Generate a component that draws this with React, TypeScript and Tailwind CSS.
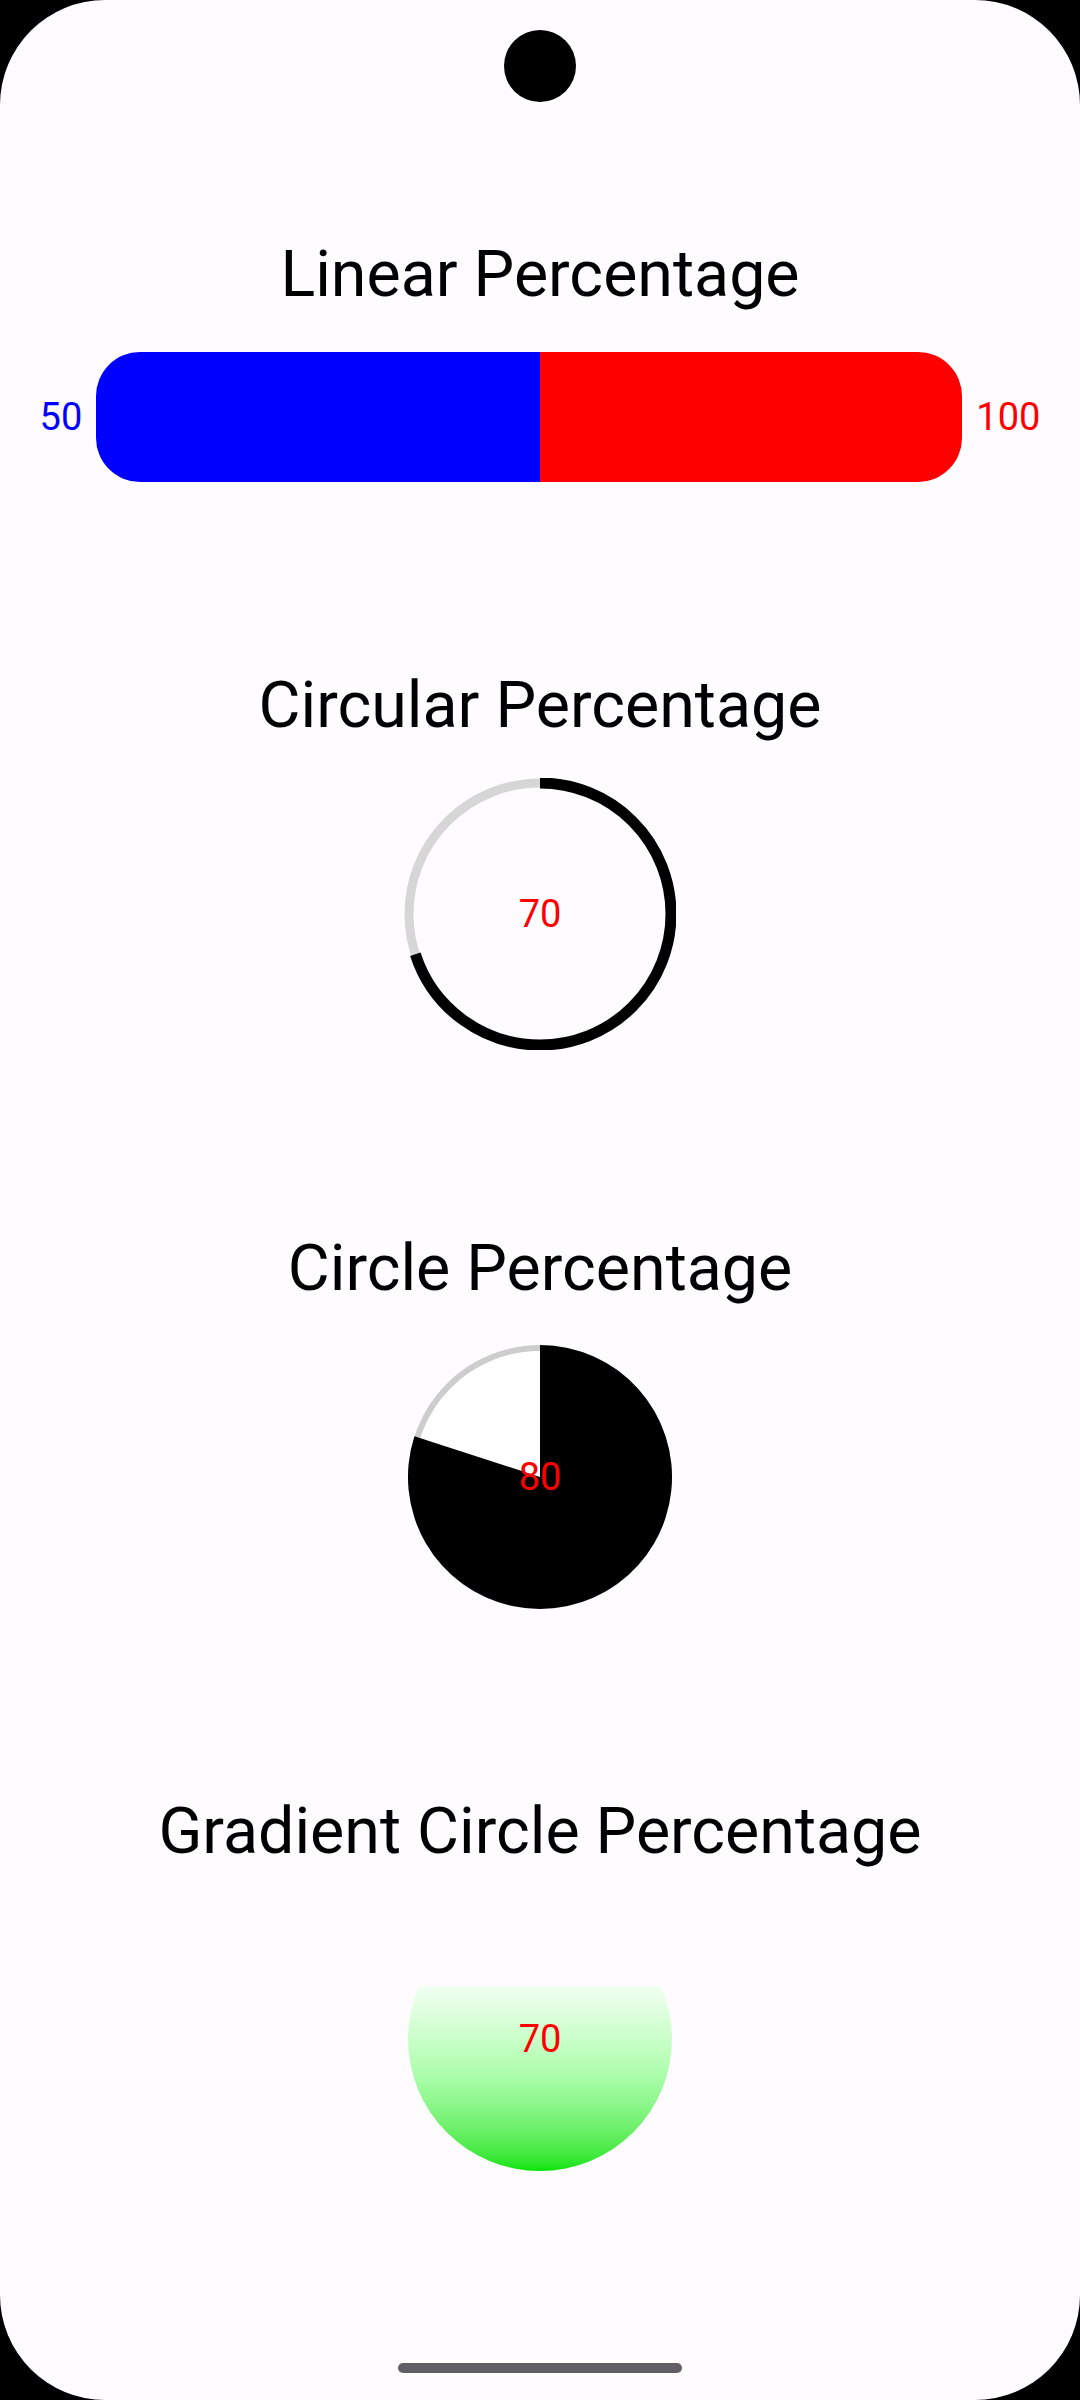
import React from "react";

const font = { fontFamily: "Roboto, 'Noto Sans', sans-serif" };

function Title({ children }: { children: React.ReactNode }) {
  return (
    <h1 className="text-[64.5px] leading-[77px] font-normal text-black text-center whitespace-nowrap">
      {children}
    </h1>
  );
}

function LinearPercentage() {
  return (
    <div className="mt-[39px] flex w-full items-center justify-center gap-[14px]">
      <span className="text-[38px] leading-none text-[#0000ff]">50</span>
      <div className="flex h-[130px] w-[866px] overflow-hidden rounded-[44px]">
        <div className="w-[444px] bg-[#0000ff]" />
        <div className="flex-1 bg-[#ff0000]" />
      </div>
      <span className="text-[38px] leading-none text-[#ff0000]">100</span>
    </div>
  );
}

function CircularPercentage({ value }: { value: number }) {
  const r = 131;
  const c = 2 * Math.PI * r;
  return (
    <div className="relative mt-[34px] h-[272px] w-[272px]">
      <svg width="272" height="272" viewBox="0 0 272 272">
        <circle cx="136" cy="136" r={r} fill="none" stroke="#d6d6d6" strokeWidth="9" />
        <circle
          cx="136"
          cy="136"
          r={r}
          fill="none"
          stroke="#000"
          strokeWidth="11"
          strokeDasharray={`${(c * value) / 100} ${c}`}
          transform="rotate(-90 136 136)"
        />
      </svg>
      <span className="absolute inset-0 flex items-center justify-center text-[38px] text-[#ff0000]">
        {value}
      </span>
    </div>
  );
}

function CirclePercentage({ value }: { value: number }) {
  const R = 132;
  const a = (value / 100) * 2 * Math.PI;
  const x = 132 + R * Math.sin(a);
  const y = 132 - R * Math.cos(a);
  const large = value > 50 ? 1 : 0;
  return (
    <div className="relative mt-[38px] h-[264px] w-[264px]">
      <svg width="264" height="264" viewBox="0 0 264 264">
        <circle cx="132" cy="132" r="129" fill="#fff" stroke="#cdcdcd" strokeWidth="6" />
        <path d={`M132 132 L132 0 A${R} ${R} 0 ${large} 1 ${x} ${y} Z`} fill="#000" />
      </svg>
      <span className="absolute inset-0 flex items-center justify-center text-[38px] text-[#ff0000]">
        {value}
      </span>
    </div>
  );
}

function GradientCirclePercentage({ value }: { value: number }) {
  return (
    <div className="relative mt-[37px] h-[264px] w-[264px]">
      <div className="flex h-full w-full flex-col justify-end overflow-hidden rounded-full">
        <div
          className="w-full bg-gradient-to-b from-[#f2fff2] via-[#a8fda8] to-[#00e400]"
          style={{ height: `${value}%` }}
        />
      </div>
      <span className="absolute inset-0 flex items-center justify-center text-[38px] text-[#ff0000]">
        {value}
      </span>
    </div>
  );
}

export default function App() {
  return (
    <div className="relative h-[2400px] w-[1080px] bg-black" style={font}>
      <div className="flex h-full w-full flex-col items-center rounded-[105px] bg-[#fefcff] pt-[236px]">
        <Title>Linear Percentage</Title>
        <LinearPercentage />

        <div className="mt-[185px]">
          <Title>Circular Percentage</Title>
        </div>
        <CircularPercentage value={70} />

        <div className="mt-[180px]">
          <Title>Circle Percentage</Title>
        </div>
        <CirclePercentage value={80} />

        <div className="mt-[184px]">
          <Title>Gradient Circle Percentage</Title>
        </div>
        <GradientCirclePercentage value={70} />
      </div>

      {/* camera cutout + gesture bar */}
      <div className="absolute left-[504px] top-[30px] h-[72px] w-[72px] rounded-full bg-black" />
      <div className="absolute bottom-[27px] left-[398px] h-[10px] w-[284px] rounded-full bg-[#605f66]" />
    </div>
  );
}
